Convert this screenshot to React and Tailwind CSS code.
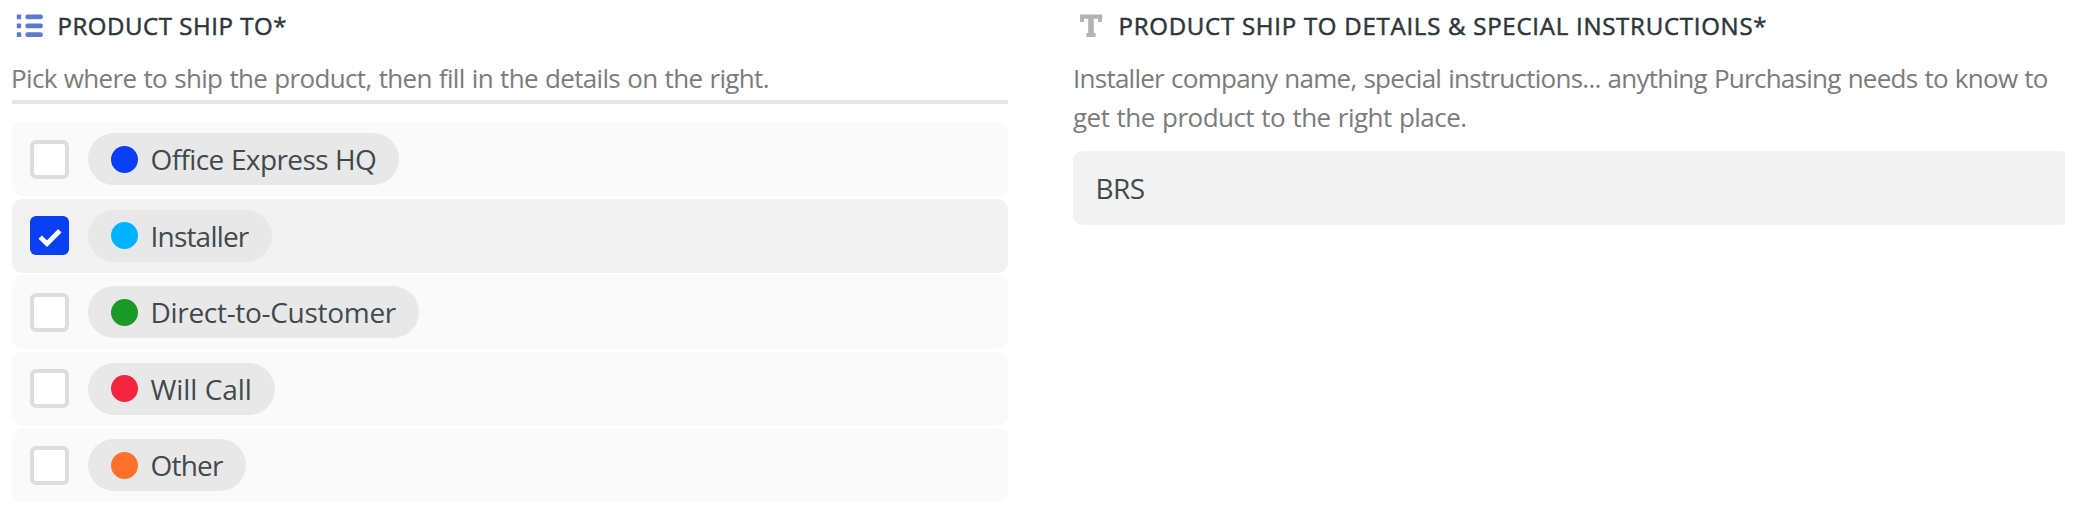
const OPTIONS = [
  { label: 'Office Express HQ', dot: 'bg-[#0a3ff5]', width: 'w-[311px]', tracking: 'tracking-[-0.6px]' },
  { label: 'Installer', dot: 'bg-[#00b2ff]', width: 'w-[184px]', tracking: 'tracking-[-0.8px]', checked: true },
  { label: 'Direct-to-Customer', dot: 'bg-[#1a9926]', width: 'w-[331px]', tracking: 'tracking-[-0.3px]' },
  { label: 'Will Call', dot: 'bg-[#f3253f]', width: 'w-[187px]', tracking: 'tracking-[-0.1px]' },
  { label: 'Other', dot: 'bg-[#ff702c]', width: 'w-[158px]', tracking: 'tracking-[-0.8px]' },
];

function ListIcon() {
  return (
    <svg className="h-[24px] w-[28px] shrink-0" viewBox="0 0 28 24" fill="#5e79d0" aria-hidden="true">
      {[0.5, 9.4, 18.2].map((y) => (
        <g key={y}>
          <rect x="0.8" y={y} width="4.4" height="4.8" rx="0.6" />
          <rect x="9.3" y={y} width="17.6" height="4.8" rx="2.2" />
        </g>
      ))}
    </svg>
  );
}

function TextIcon() {
  return (
    <svg className="h-[24px] w-[24px] shrink-0" viewBox="0 0 24 24" fill="#b3b3b3" aria-hidden="true">
      <path d="M1 0.5H23V8H19V4.7H14.8V19H16.6V23H7.4V19H9.2V4.7H5V8H1Z" />
    </svg>
  );
}

function Checkbox({ checked }) {
  if (!checked) {
    return <span className="size-[39px] shrink-0 rounded-[6px] border-4 border-[#dddddd] bg-white" />;
  }
  return (
    <span className="flex size-[39px] shrink-0 items-center justify-center rounded-[6px] bg-[#0b3ff4]">
      <svg className="size-[39px]" viewBox="0 0 39 39" fill="none" aria-hidden="true">
        <path d="M10.2 21.1L17 27.7L29.8 14.7" stroke="#fff" strokeWidth="4.8" />
      </svg>
    </span>
  );
}

export default function App() {
  return (
    <main className="flex h-[506px] w-[2073px] items-start overflow-hidden bg-white font-['Open_Sans',sans-serif] text-[#414a4e]">
      <section className="ml-3 w-[996px]">
        <h2 className="mt-[8px] flex h-9 items-center pl-1 text-[24px] leading-9 font-medium text-[#2d363a] [-webkit-text-stroke:0.5px_#2d363a]">
          <ListIcon />
          <span className="ml-[13.5px] whitespace-nowrap tracking-[0.55px]">PRODUCT SHIP TO*</span>
        </h2>
        <p className="mt-[15px] h-[45px] border-b-4 border-[#e6e6e6] text-[26px] leading-[39px] whitespace-nowrap text-[#7b7b7b]">
          <span className="-ml-[1px] tracking-[-0.66px] [word-spacing:1px]">Pick where to ship the product, then fill in the details on the right.</span>
        </p>
        <ul className="mt-[18px] flex flex-col gap-[2.6px]">
          {OPTIONS.map((o) => (
            <li
              key={o.label}
              className={`flex h-[74px] items-center rounded-[10px] pl-[18px] ${o.checked ? 'bg-[#f2f2f2]' : 'bg-[#fafafa]'}`}
            >
              <Checkbox checked={o.checked} />
              <span className={`ml-[19px] flex h-[52px] items-center rounded-full bg-[#e8e8e8] pl-[23px] ${o.width}`}>
                <span className={`size-[27px] shrink-0 rounded-full ${o.dot}`} />
                <span className={`ml-[12.5px] text-[28px] leading-[52px] whitespace-nowrap [word-spacing:0.5px] ${o.tracking}`}>{o.label}</span>
              </span>
            </li>
          ))}
        </ul>
      </section>

      <section className="ml-[65px] w-[992px]">
        <h2 className="mt-[8px] flex h-9 items-center pl-[6px] text-[24px] leading-9 font-medium text-[#2d363a] [-webkit-text-stroke:0.5px_#2d363a]">
          <TextIcon />
          <span className="ml-[15.5px] whitespace-nowrap tracking-[0.75px]">PRODUCT SHIP TO DETAILS &amp; SPECIAL INSTRUCTIONS*</span>
        </h2>
        <p className="mt-[15px] text-[26px] leading-[39px] whitespace-nowrap text-[#7b7b7b]">
          <span className="block tracking-[-0.74px] [word-spacing:1px]">Installer company name, special instructions... anything Purchasing needs to know to</span>
          <span className="block tracking-[-0.53px] [word-spacing:1px]">get the product to the right place.</span>
        </p>
        <div className="mt-[14px] flex h-[74px] items-center rounded-l-[10px] rounded-r-[4px] bg-[#f2f2f2] pl-[22.5px] text-[28px] tracking-[-0.6px]">BRS</div>
      </section>
    </main>
  );
}
